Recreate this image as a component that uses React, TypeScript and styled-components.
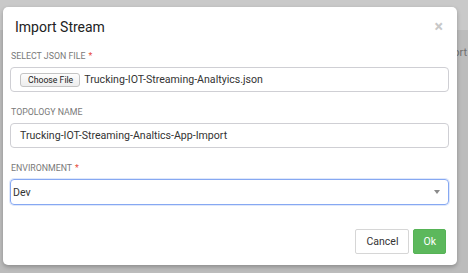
import React from "react";
import styled, { createGlobalStyle } from "styled-components";

const Global = createGlobalStyle`
  html, body { margin: 0; padding: 0; }
  body {
    width: 468px;
    height: 273px;
    overflow: hidden;
    font-family: Roboto, "Liberation Sans", Arial, sans-serif;
    background: #bdbdbd;
  }
`;

const Page = styled.div`
  position: relative;
  width: 468px;
  height: 273px;
  display: flex;
  flex-direction: column;
`;

const PageTopBar = styled.div`
  height: 30px;
  background: #c9c9c9;
`;

const PageBody = styled.div`
  flex: 1;
  display: flex;
  justify-content: flex-end;
  padding: 16px 1px 0 0;
  background: #bcbcbc;
`;

const PageText = styled.span`
  font-size: 11px;
  line-height: 13px;
  height: 13px;
  color: #707070;
`;

const Backdrop = styled.div`
  position: absolute;
  inset: 0;
  padding: 7px 11px 8px 3px;
  box-sizing: border-box;
`;

const Modal = styled.div`
  width: 454px;
  height: 258px;
  box-sizing: border-box;
  background: #fff;
  border-radius: 5px;
  box-shadow: 0 2px 4px rgba(0, 0, 0, 0.25);
  display: flex;
  flex-direction: column;
`;

const Header = styled.div`
  display: flex;
  justify-content: space-between;
  align-items: flex-start;
  padding: 11px 14px 0 12px;
`;

const Title = styled.h4`
  margin: 0;
  font-size: 14px;
  line-height: 18px;
  font-weight: 400;
  color: #222;
`;

const Close = styled.span`
  font-size: 16px;
  line-height: 18px;
  color: #c8c8c8;
  font-weight: 700;
`;

const Body = styled.div`
  padding: 14px 8px 0 7px;
  display: flex;
  flex-direction: column;
  gap: 14px;
`;

const Field = styled.div`
  display: flex;
  flex-direction: column;
`;

const Label = styled.label`
  font-size: 8.8px;
  line-height: 12px;
  color: #7a7a7a;
  text-transform: uppercase;
  margin: 0 0 5px 1px;
`;

const Req = styled.span`
  color: #e74c3c;
  margin-left: 3px;
`;

const Box = styled.div<{ $focus?: boolean; $h?: number }>`
  height: ${(p) => p.$h ?? 25}px;
  box-sizing: border-box;
  border: 1px solid ${(p) => (p.$focus ? "#86a8f2" : "#cfcfd4")};
  border-radius: 4px;
  box-shadow: ${(p) => (p.$focus ? "0 0 0 1px #dfe8fb" : "none")};
  display: flex;
  align-items: center;
  padding: ${(p) => (p.$focus ? "0 8px 0 2px" : "0 9px")};
  font-size: 10.6px;
  color: #333;
`;

const FileButton = styled.span`
  height: 12px;
  display: inline-flex;
  align-items: center;
  padding: 0 6px 0 7px;
  border: 1px solid #c4c4c4;
  border-radius: 3px;
  background: linear-gradient(#fdfdfd, #ededed);
  font-size: 8.7px;
  color: #222;
  margin-right: 4px;
`;

const BoxText = styled.span`
  flex: 1;
  white-space: nowrap;
`;

const Caret = styled.span`
  width: 0;
  height: 0;
  border-left: 3.5px solid transparent;
  border-right: 3.5px solid transparent;
  border-top: 4px solid #8a8a8a;
`;

const Footer = styled.div`
  margin-top: auto;
  display: flex;
  justify-content: flex-end;
  gap: 4px;
  padding: 0 11px 11px 0;
`;

const Button = styled.button<{ $primary?: boolean }>`
  height: 25px;
  box-sizing: border-box;
  padding: 0 ${(p) => (p.$primary ? "9px" : "10px")};
  font-family: Roboto, "Liberation Sans", Arial, sans-serif;
  font-size: 10.5px;
  border-radius: 2px;
  border: 1px solid ${(p) => (p.$primary ? "#56b356" : "#d6d6d6")};
  background: ${(p) => (p.$primary ? "#5cb85c" : "#fff")};
  color: ${(p) => (p.$primary ? "#fff" : "#333")};
`;

export default function App() {
  return (
    <>
      <Global />
      <Page>
        <PageTopBar />
        <PageBody>
          <PageText>Import</PageText>
        </PageBody>
        <Backdrop>
          <Modal>
            <Header>
              <Title>Import Stream</Title>
              <Close>×</Close>
            </Header>
            <Body>
              <Field>
                <Label>
                  Select JSON File<Req>*</Req>
                </Label>
                <Box>
                  <FileButton>Choose File</FileButton>
                  <BoxText>Trucking-IOT-Streaming-Analtyics.json</BoxText>
                </Box>
              </Field>
              <Field>
                <Label>Topology Name</Label>
                <Box>
                  <BoxText>Trucking-IOT-Streaming-Analtics-App-Import</BoxText>
                </Box>
              </Field>
              <Field>
                <Label>
                  Environment<Req>*</Req>
                </Label>
                <Box $focus $h={26}>
                  <BoxText>Dev</BoxText>
                  <Caret />
                </Box>
              </Field>
            </Body>
            <Footer>
              <Button>Cancel</Button>
              <Button $primary>Ok</Button>
            </Footer>
          </Modal>
        </Backdrop>
      </Page>
    </>
  );
}
